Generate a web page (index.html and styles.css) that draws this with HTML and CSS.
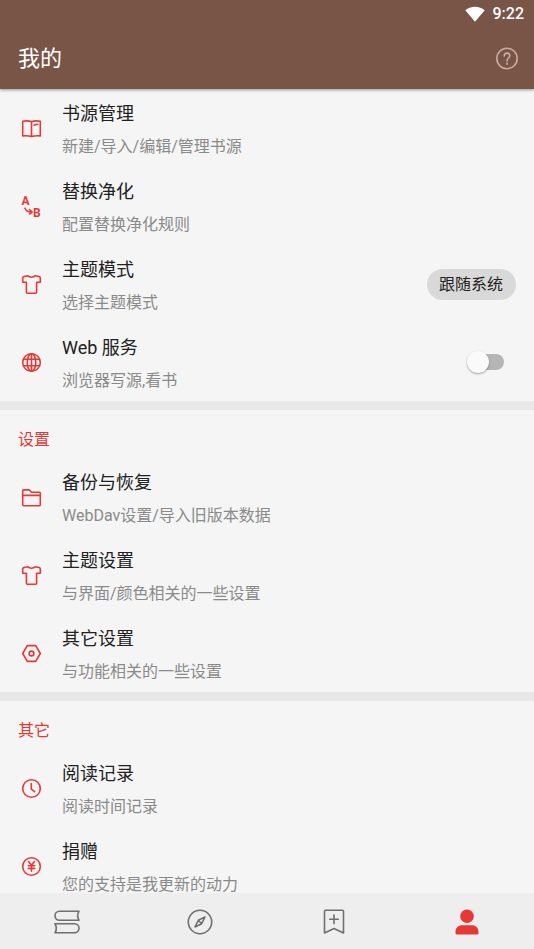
FILE: index.html
```html
<!DOCTYPE html>
<html lang="zh-CN">
<head>
<meta charset="utf-8">
<meta name="viewport" content="width=device-width, initial-scale=1">
<title>我的</title>
<link rel="stylesheet" href="styles.css">
</head>
<body>
<header class="app-header">
  <div class="status-bar">
    <svg class="wifi" viewBox="0 0 20 16" aria-hidden="true"><path d="M0.3 4.2C3 2 6.300 .8 10 .8s7 1.200 9.700 3.400L10 15.800z"/></svg>
    <span>9:22</span>
  </div>
  <div class="toolbar">
    <h1>我的</h1>
    <button class="help" type="button" aria-label="帮助">
      <svg class="icon" viewBox="0 0 24 24" aria-hidden="true"><circle cx="12" cy="11.500" r="10.200"/><path d="M9.200 9c0-1.700 1.200-2.900 2.800-2.900s2.800 1.100 2.800 2.600c0 2.200-2.800 2.600-2.800 5.300"/><path d="M12 16v1.300"/></svg>
    </button>
  </div>
</header>

<main class="content">
  <section class="group">
    <a class="row" href="#sources">
      <svg class="icon" viewBox="0 0 23 23" aria-hidden="true"><path d="M2.700 4.200c3-.5 6-.4 8.800.4 2.800-.8 5.800-.9 8.800-.4v14.700c-3-.3-6-.2-8.800.6-2.800-.8-5.800-.9-8.800-.6zM11.500 4.600v14.900M14 8.200c1.200-.5 2.400-.8 3.800-.9"/></svg>
      <span class="text"><span class="title">书源管理</span><span class="summary">新建/导入/编辑/管理书源</span></span>
    </a>
    <a class="row" href="#replace">
      <svg class="icon" viewBox="0 0 23 23" aria-hidden="true"><text x="1.500" y="10">A</text><text x="13" y="21.500">B</text><path d="M5 13.200c1 2.500 3 3.800 6.500 3.800M9.500 14.500l2.700 2.500-2.700 2"/></svg>
      <span class="text"><span class="title">替换净化</span><span class="summary">配置替换净化规则</span></span>
    </a>
    <div class="row">
      <svg class="icon" viewBox="0 0 23 23" aria-hidden="true"><path d="M8 2.700c1.200 2 5.800 2 7 0l4 .8c.8.200 1.300.800 1.300 1.600v4.100h-3.700v10.100c0 .6-.4 1-1 1H7.400c-.6 0-1-.4-1-1V9.200H2.700V5.100c0-.8.5-1.400 1.300-1.600z"/></svg>
      <label class="text" for="theme-mode"><span class="title">主题模式</span><span class="summary">选择主题模式</span></label>
      <select class="chip" id="theme-mode"><option>跟随系统</option><option>亮色主题</option><option>暗色主题</option></select>
    </div>
    <div class="row">
      <svg class="icon" viewBox="0 0 23 23" aria-hidden="true"><circle cx="11.500" cy="11.500" r="8.800"/><ellipse cx="11.500" cy="11.500" rx="4.300" ry="8.800"/><path d="M11.500 2.700v17.600M3.500 8.200h16M3.500 14.800h16"/></svg>
      <label class="text" for="web-service"><span class="title">Web 服务</span><span class="summary">浏览器写源,看书</span></label>
      <input class="switch" id="web-service" type="checkbox" role="switch">
    </div>
  </section>

  <section class="group">
    <h2>设置</h2>
    <a class="row" href="#backup">
      <svg class="icon" viewBox="0 0 23 23" aria-hidden="true"><path d="M2.700 18.800V4.800c0-.5.4-.9.900-.9h5.600l2.300 2.300h7.900c.5 0 .9.400.9.900v11.700c0 .5-.4.900-.9.900H3.600c-.5 0-.9-.4-.9-.9zM2.700 9.400h17.600"/></svg>
      <span class="text"><span class="title">备份与恢复</span><span class="summary">WebDav设置/导入旧版本数据</span></span>
    </a>
    <a class="row" href="#theme">
      <svg class="icon" viewBox="0 0 23 23" aria-hidden="true"><path d="M8 2.700c1.200 2 5.800 2 7 0l4 .8c.8.200 1.300.800 1.300 1.600v4.100h-3.700v10.100c0 .6-.4 1-1 1H7.400c-.6 0-1-.4-1-1V9.200H2.700V5.100c0-.8.5-1.400 1.300-1.600z"/></svg>
      <span class="text"><span class="title">主题设置</span><span class="summary">与界面/颜色相关的一些设置</span></span>
    </a>
    <a class="row" href="#other">
      <svg class="icon" viewBox="0 0 23 23" aria-hidden="true"><path d="M7.300 3.600h8.400l4.600 7.900-4.600 7.900H7.300l-4.600-7.900z"/><circle cx="11.500" cy="11.500" r="2.400"/></svg>
      <span class="text"><span class="title">其它设置</span><span class="summary">与功能相关的一些设置</span></span>
    </a>
  </section>

  <section class="group">
    <h2>其它</h2>
    <a class="row" href="#history">
      <svg class="icon" viewBox="0 0 23 23" aria-hidden="true"><circle cx="11.500" cy="11.500" r="8.800"/><path d="M11.300 6.500v5.700l3.400 2.400"/></svg>
      <span class="text"><span class="title">阅读记录</span><span class="summary">阅读时间记录</span></span>
    </a>
    <a class="row" href="#donate">
      <svg class="icon" viewBox="0 0 23 23" aria-hidden="true"><circle cx="11.500" cy="11.500" r="8.800"/><path d="M8.700 6.700l2.800 3.600 2.800-3.600M11.500 10.300v6M8.300 10.700h6.400M8.300 13.400h6.400"/></svg>
      <span class="text"><span class="title">捐赠</span><span class="summary">您的支持是我更新的动力</span></span>
    </a>
  </section>
</main>

<nav class="tabs">
  <a href="#bookshelf" aria-label="书架">
    <svg class="icon" viewBox="0 0 30 30" aria-hidden="true"><path d="M27 4.200H7.500C4.800 4.200 3 6.300 3 8.700s1.800 4.500 4.500 4.500H27c-1.800-3-1.800-6 0-9zM3 16.800h19.500c2.700 0 4.500 2.100 4.500 4.500s-1.800 4.500-4.500 4.500H3c1.800-3 1.800-6 0-9z"/></svg>
  </a>
  <a href="#discover" aria-label="发现">
    <svg class="icon" viewBox="0 0 30 30" aria-hidden="true"><circle cx="15" cy="15" r="11.700"/><path d="M20 10l-3.300 6.700L10 20l3.300-6.700zM13.300 13.300l3.400 3.400"/></svg>
  </a>
  <a href="#subscribe" aria-label="订阅">
    <svg class="icon" viewBox="0 0 30 30" aria-hidden="true"><path d="M6.500 3.300h17c.6 0 1 .4 1 1v21.600L15 21.500l-9.500 4.400V4.300c0-.6.400-1 1-1zM15 8v8.600M10.700 12.300h8.600"/></svg>
  </a>
  <a class="active" href="#mine" aria-label="我的" aria-current="page">
    <svg class="icon" viewBox="0 0 30 30" aria-hidden="true"><circle cx="15" cy="9.300" r="6.800"/><path d="M3.500 26.300v-1.500c0-4 3-6.500 6.500-6.500h10c3.500 0 6.500 2.500 6.500 6.500v1.500c0 .7-.5 1.200-1.200 1.200H4.700c-.7 0-1.200-.5-1.200-1.200z"/></svg>
  </a>
</nav>
</body>
</html>
```
FILE: styles.css
```css
:root {
  --primary: #795548;
  --accent: #e53935;
  --surface: #f5f5f5;
  --divider: #e8e8e8;
  --ink: #212121;
  --muted: #8a8a8a;
}

* {
  box-sizing: border-box;
}

body {
  display: flex;
  flex-direction: column;
  height: 100vh;
  margin: 0;
  background: var(--surface);
  color: var(--ink);
  font-family: Roboto, "Noto Sans CJK SC", sans-serif;
  font-size: 16px;
  line-height: 24px;
}

a {
  color: inherit;
  text-decoration: none;
}

.icon {
  flex: none;
  fill: none;
  stroke: currentColor;
  stroke-linecap: round;
  stroke-linejoin: round;
}

.app-header {
  position: relative;
  flex: none;
  background: var(--primary);
  color: #fff;
  box-shadow: 0 1px 3px rgba(0, 0, 0, 0.4);
}

.status-bar {
  display: flex;
  align-items: center;
  justify-content: flex-end;
  gap: 8px;
  height: 28px;
  padding-right: 10px;
  font-weight: 500;
}

.wifi {
  width: 20px;
  height: 16px;
  fill: #fff;
}

.toolbar {
  display: flex;
  align-items: center;
  justify-content: space-between;
  height: 61px;
  padding: 0 15px 0 18px;
}

h1 {
  margin: 0;
  font-size: 22px;
  font-weight: 400;
}

.help {
  display: flex;
  padding: 0;
  border: 0;
  background: none;
  color: #c9aba0;
}

.help .icon {
  width: 24px;
  height: 24px;
  stroke-width: 1.6;
}

.content {
  flex: 1;
  min-height: 0;
  overflow-y: auto;
  scrollbar-width: none;
}

.group + .group {
  border-top: 9px solid var(--divider);
}

h2 {
  margin: 0;
  padding: 18px 18px 6px;
  color: var(--accent);
  font-size: 16px;
  font-weight: 400;
}

.row {
  display: flex;
  align-items: center;
  gap: 19px;
  height: 78px;
  padding: 0 18px 0 20px;
}

.row .icon {
  width: 23px;
  height: 23px;
  color: var(--accent);
  stroke-width: 1.6;
}

.row .icon text {
  fill: currentColor;
  stroke: none;
  font-size: 12px;
  font-weight: 700;
}

.text {
  display: flex;
  flex: 1;
  flex-direction: column;
  gap: 9px;
  padding-top: 5px;
}

.title {
  font-size: 18px;
}

.summary {
  color: var(--muted);
}

.chip {
  appearance: none;
  height: 31px;
  padding: 2px 12px 0;
  border: 0;
  border-radius: 16px;
  background: #d9d9d9;
  color: var(--ink);
  font: inherit;
}

.switch {
  appearance: none;
  position: relative;
  width: 30px;
  height: 16px;
  margin: 0 12px;
  border-radius: 8px;
  background: #b5b5b5;
}

.switch::before {
  content: "";
  position: absolute;
  top: -3px;
  left: -7px;
  width: 22px;
  height: 22px;
  border-radius: 50%;
  background: #fafafa;
  box-shadow: 0 1px 2px rgba(0, 0, 0, 0.35);
}

.switch:checked {
  background: #f29c9a;
}

.switch:checked::before {
  left: 15px;
  background: var(--accent);
}

.tabs {
  display: flex;
  flex: none;
  height: 56px;
  padding-top: 1px;
  background: #eee;
  color: #6f6f6f;
}

.tabs a {
  display: flex;
  flex: 1;
  align-items: center;
  justify-content: center;
}

.tabs .icon {
  width: 30px;
  height: 30px;
  stroke-width: 1.6;
}

.tabs .active {
  color: var(--accent);
}

.tabs .active .icon {
  fill: currentColor;
  stroke: none;
}
```
